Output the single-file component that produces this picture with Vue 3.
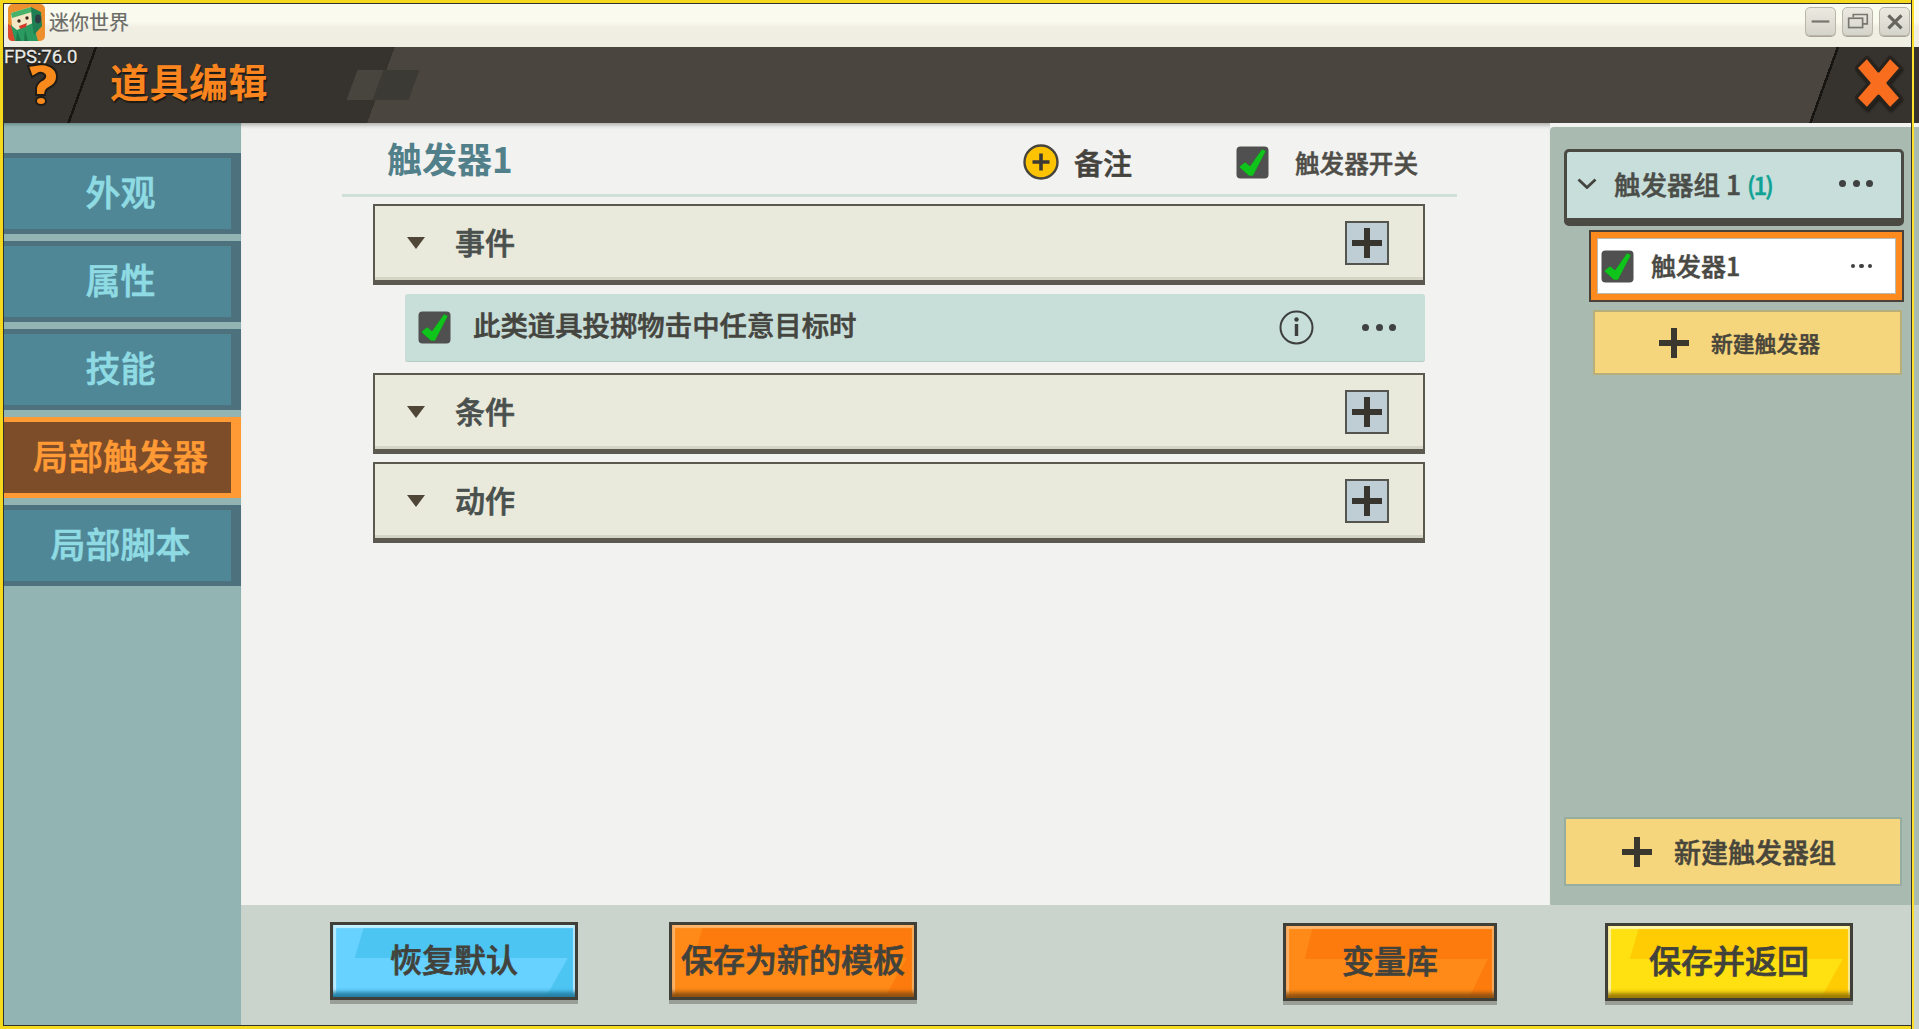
<template>
  <div class="app">
    <div class="titlebar">
      <svg class="logo" viewBox="0 0 37 37">
        <rect width="37" height="37" rx="5" fill="#ee8f2e" />
        <path d="M0 20 L7 24 L10 37 H5 Q0 37 0 32Z" fill="#d9472c" />
        <path d="M3 21 L25 19 L30 37 H7Z" fill="#2a9a60" />
        <path d="M9 27 L13 37 H8Z M17 26 L20 37 H16Z" fill="#1d7a4b" />
        <path d="M3 9 L23 3 L25 19 L9 26 L4 22Z" fill="#f4e7c6" />
        <path d="M3 9 L23 3 L24 8 L4 14Z" fill="#46b26a" />
        <path d="M23 3 L33 8 L34 22 L26 31 L24 19Z" fill="#1f7f52" />
        <circle cx="11" cy="17" r="1.7" fill="#3c2a1c" />
        <circle cx="19" cy="14" r="1.7" fill="#3c2a1c" />
        <path d="M11 22 L19 19 L18 23 L12 25Z" fill="#d23b2b" />
        <ellipse cx="30" cy="15" rx="3" ry="4.4" fill="#2f3d45" />
      </svg>
      <span class="app-name">迷你世界</span>
      <div class="win-btns">
        <button class="win-btn">
          <svg viewBox="0 0 31 29"><path d="M6 14.5 H25" stroke="#77776f" stroke-width="2.4" /></svg>
        </button>
        <button class="win-btn">
          <svg viewBox="0 0 31 29" fill="none" stroke="#77776f" stroke-width="1.8"><path d="M11 10 V7 H26 V17 H21" /><rect x="6" y="11" width="15" height="10" /></svg>
        </button>
        <button class="win-btn">
          <svg viewBox="0 0 31 29"><path d="M9 8 L23 22 M23 8 L9 22" stroke="#66665f" stroke-width="3.4" /></svg>
        </button>
      </div>
    </div>

    <header class="topbar">
      <div class="help-cell">
        <svg class="help" viewBox="0 0 32 44">
          <path d="M1 3 L15 1 Q30 3 30 14 Q30 21 22 25 Q18 27 18 32 H9 V25 Q10 20 15 17 Q19 15 18 12 Q16 9 12 10 L5 14Z" fill="#fa8a1c" stroke="#1f1c18" stroke-width="2" />
          <ellipse cx="14" cy="38" rx="5" ry="4" fill="#fa8a1c" stroke="#1f1c18" stroke-width="2" />
        </svg>
      </div>
      <h1 class="page-title">道具编辑</h1>
      <div class="deco">
        <i class="deco-a"></i>
        <i class="deco-b"></i>
      </div>
      <div class="close-cell">
        <svg class="close" viewBox="0 0 48 56">
          <path d="M12 2 L23.5 16 L35 2 L46 13 L33 28 L46 43 L35 54 L23.5 41 L12 54 L1 43 L14 28 L1 13Z" fill="#f96d1e" stroke="#26221d" stroke-width="3" stroke-linejoin="round" />
        </svg>
      </div>
      <span class="fps">FPS:76.0</span>
    </header>

    <div class="body">
      <nav class="sidebar">
        <div
          v-for="tab in tabs"
          :key="tab"
          :class="['tab', { active: tab === activeTab }]"
        >
          <span>{{ tab }}</span>
        </div>
      </nav>

      <div class="content">
        <div class="upper">
          <main class="editor">
            <div class="editor-head">
              <h2 class="trigger-name">触发器1</h2>
              <div class="note">
                <svg class="note-icon" viewBox="0 0 36 36">
                  <circle cx="18" cy="18" r="16.5" fill="#fdc301" stroke="#46443c" stroke-width="2.4" />
                  <path d="M18 9.5 V26.5 M9.5 18 H26.5" stroke="#3d3a33" stroke-width="3.6" />
                </svg>
                <span>备注</span>
              </div>
              <div class="switch">
                <svg class="check" viewBox="0 0 33 33">
                  <rect x="0.5" y="0.5" width="32" height="32" rx="4" fill="#505050" />
                  <path d="M3 21 L9 16 L14 20 L26 3 L30 5 L17 30 H13Z" fill="#0fc51c" stroke="#3a5a3a" stroke-width="0.6" />
                </svg>
                <span>触发器开关</span>
              </div>
            </div>

            <div class="sections">
              <template v-for="sec in sections" :key="sec.name">
                <div class="section">
                  <i class="caret"></i>
                  <span class="section-name">{{ sec.name }}</span>
                  <span class="add-box">
                    <svg viewBox="0 0 30 30"><path d="M15 0 V30 M0 15 H30" stroke="#38352f" stroke-width="6" /></svg>
                  </span>
                </div>
                <div v-for="item in sec.items" :key="item" class="rule">
                  <svg class="check" viewBox="0 0 33 33">
                    <rect x="0.5" y="0.5" width="32" height="32" rx="4" fill="#505050" />
                    <path d="M3 21 L9 16 L14 20 L26 3 L30 5 L17 30 H13Z" fill="#0fc51c" stroke="#3a5a3a" stroke-width="0.6" />
                  </svg>
                  <span class="rule-text">{{ item }}</span>
                  <svg class="info" viewBox="0 0 35 35">
                    <circle cx="17.5" cy="17.5" r="16" fill="none" stroke="#3c3f3c" stroke-width="2" />
                    <circle cx="17.5" cy="9.5" r="2.2" fill="#3c3f3c" />
                    <path d="M17.5 14 V26" stroke="#3c3f3c" stroke-width="3.4" />
                  </svg>
                  <span class="dots"><i></i><i></i><i></i></span>
                </div>
              </template>
            </div>
          </main>

          <aside class="groups">
            <div class="group-head">
              <svg class="chevron" viewBox="0 0 20 11" fill="none"><path d="M1.5 1.5 L10 9.5 L18.5 1.5" stroke="#45453f" stroke-width="2.8" /></svg>
              <span class="group-name">触发器组 <b>1</b> <em>(1)</em></span>
              <span class="dots"><i></i><i></i><i></i></span>
            </div>
            <div class="trigger-item">
              <svg class="check" viewBox="0 0 33 33">
                <rect x="0.5" y="0.5" width="32" height="32" rx="4" fill="#505050" />
                <path d="M3 21 L9 16 L14 20 L26 3 L30 5 L17 30 H13Z" fill="#0fc51c" stroke="#3a5a3a" stroke-width="0.6" />
              </svg>
              <span class="trigger-label">触发器1</span>
              <span class="dots small"><i></i><i></i><i></i></span>
            </div>
            <button class="new-trigger">
              <svg viewBox="0 0 30 30"><path d="M15 0 V30 M0 15 H30" stroke="#3a372f" stroke-width="6" /></svg>
              <span>新建触发器</span>
            </button>
            <button class="new-group">
              <svg viewBox="0 0 30 30"><path d="M15 0 V30 M0 15 H30" stroke="#3a372f" stroke-width="6" /></svg>
              <span>新建触发器组</span>
            </button>
          </aside>
        </div>

        <footer class="footer">
          <button class="game-btn blue reset">恢复默认</button>
          <button class="game-btn orange template">保存为新的模板</button>
          <button class="game-btn orange vars">变量库</button>
          <button class="game-btn yellow save">保存并返回</button>
        </footer>
      </div>
    </div>

    <div class="capture-frame"></div>
    <div class="capture-line"></div>
  </div>
</template>

<script setup>
const tabs = ['外观', '属性', '技能', '局部触发器', '局部脚本']
const activeTab = '局部触发器'

const sections = [
  { name: '事件', items: ['此类道具投掷物击中任意目标时'] },
  { name: '条件', items: [] },
  { name: '动作', items: [] }
]
</script>

<style>
html, body {
  margin: 0;
  background: #f2f2f0;
}
</style>

<style scoped>
.app {
  position: relative;
  width: 1919px;
  height: 1029px;
  overflow: hidden;
  display: flex;
  flex-direction: column;
  font-family: "Noto Sans CJK SC", "Noto Sans", sans-serif;
}

.titlebar {
  height: 47px;
  flex: none;
  box-sizing: border-box;
  padding: 4px 9px 0 8px;
  display: flex;
  align-items: flex-start;
  background: linear-gradient(#fbfcf1 0, #fafaee 22px, #f1efe4 27px, #efeee2 100%);
}
.logo {
  width: 37px;
  height: 37px;
  flex: none;
}
.app-name {
  margin: 5px 0 0 4px;
  font-size: 20px;
  line-height: 26px;
  color: #6a6a66;
  -webkit-text-stroke: 0.2px currentColor;
}
.win-btns {
  margin-left: auto;
  margin-top: 3px;
  display: flex;
  gap: 6px;
}
.win-btn {
  width: 31px;
  height: 29px;
  padding: 0;
  border: 1px solid #b9b5a8;
  border-radius: 5px;
  background: linear-gradient(#eceae0, #d5d4cb);
  box-shadow: 0 1px 0 #a9a598;
}
.win-btn svg {
  display: block;
  width: 100%;
  height: 100%;
}

.topbar {
  position: relative;
  height: 76px;
  flex: none;
  display: flex;
  align-items: center;
  background: linear-gradient(110deg, #36332e 0, #36332e 371px, #4a463f 371px);
}
.help-cell {
  width: 110px;
  height: 100%;
  flex: none;
  box-sizing: border-box;
  padding: 16px 0 0 27px;
  background: linear-gradient(110deg, transparent 89px, #171512 89px, #171512 91.5px, transparent 91.5px);
}
.help {
  display: block;
  width: 32px;
  height: 44px;
}
.page-title {
  margin: 0 0 10px;
  font-size: 39px;
  line-height: 44px;
  font-weight: 700;
  color: #fa851e;
  text-shadow: 1px 2px 1px #1d1a16;
  letter-spacing: 0.5px;
}
.deco {
  margin-left: 84px;
  display: flex;
  align-items: center;
}
.deco i {
  display: block;
  height: 30px;
  transform: skewX(-20deg);
}
.deco-a {
  width: 32px;
  background: #48453e;
}
.deco-b {
  width: 36px;
  margin-left: -6px;
  background: #3c3a34;
}
.close-cell {
  margin-left: auto;
  width: 110px;
  height: 100%;
  flex: none;
  box-sizing: border-box;
  padding: 8px 0 0 46px;
  background: linear-gradient(110deg, transparent 26px, #171512 26px, #171512 28.5px, #36332e 28.5px);
}
.close {
  display: block;
  width: 48px;
  height: 56px;
  filter: drop-shadow(1px 2px 1px #1f1c18);
}
.fps {
  position: absolute;
  left: 4px;
  top: -2px;
  font-family: "Roboto", "Liberation Sans", sans-serif;
  font-size: 18.5px;
  line-height: 24px;
  color: #eaeae6;
  -webkit-text-stroke: 0.3px currentColor;
  text-shadow: 0 1px 1px #000;
}

.body {
  flex: 1;
  min-height: 0;
  display: flex;
}

.sidebar {
  width: 241px;
  flex: none;
  box-sizing: border-box;
  padding: 30px 0 0 3px;
  display: flex;
  flex-direction: column;
  gap: 7px;
  background: #92b5b3;
  box-shadow: inset 0 4px 3px -2px #6f8f8e;
}
.tab {
  height: 81px;
  box-sizing: border-box;
  border-style: solid;
  border-color: #4d727e;
  border-width: 5px 10px 5px 0;
  background: #4f8797;
  padding-left: 7px;
  display: flex;
  align-items: center;
  justify-content: center;
  font-size: 35px;
  font-weight: 500;
  color: #8fdbe3;
  -webkit-text-stroke: 0.6px currentColor;
}
.tab span {
  margin-top: -6px;
}
.tab.active {
  border-color: #ff9a35;
  background: #7d4c28;
  color: #ff9a35;
}

.content {
  flex: 1;
  min-width: 0;
  display: flex;
  flex-direction: column;
}
.upper {
  height: 782px;
  flex: none;
  display: flex;
}

.editor {
  width: 1309px;
  flex: none;
  box-sizing: border-box;
  padding-left: 101px;
  background: #f2f2f0;
  box-shadow: inset 0 5px 4px -3px #a9a9a4, 0 2px 0 #a7aba6;
}
.editor-head {
  width: 1115px;
  height: 74px;
  box-sizing: border-box;
  display: flex;
  align-items: center;
  border-bottom: 3px solid #cfe0d9;
  padding-left: 45px;
}
.trigger-name {
  width: 636px;
  margin: -2px 0 0;
  flex: none;
  font-size: 35px;
  font-weight: 700;
  line-height: 48px;
  color: #51808a;
}
.note {
  width: 213px;
  flex: none;
  margin-top: 7px;
  display: flex;
  align-items: center;
  gap: 15px;
  font-size: 29px;
  font-weight: 500;
  color: #45433d;
  -webkit-text-stroke: 0.6px currentColor;
}
.note-icon {
  width: 36px;
  height: 36px;
}
.switch {
  margin-top: 7px;
  display: flex;
  align-items: center;
  gap: 26px;
  font-size: 24.6px;
  font-weight: 500;
  color: #4e4d47;
  -webkit-text-stroke: 0.5px currentColor;
}
.check {
  width: 33px;
  height: 33px;
  flex: none;
}

.sections {
  width: 1052px;
  margin: 7px 0 0 31px;
  display: flex;
  flex-direction: column;
}
.section {
  height: 81px;
  box-sizing: border-box;
  margin-bottom: 9px;
  display: flex;
  align-items: center;
  border: 2px solid #5c5a50;
  border-bottom: 5px solid #5c5a50;
  background: #eaeadc;
  box-shadow: inset 0 -3px 0 #d5d5c6;
  padding: 0 34px 4px 32px;
}
.section:has(+ .section) {
  margin-bottom: 8px;
}
.caret {
  width: 0;
  height: 0;
  flex: none;
  margin-top: 4px;
  border-style: solid;
  border-width: 12px 9px 0;
  border-color: #4f4638 transparent transparent;
}
.section-name {
  margin-left: 30px;
  font-size: 30px;
  font-weight: 500;
  color: #49504d;
  -webkit-text-stroke: 0.7px currentColor;
}
.add-box {
  margin: 4px 0 0 auto;
  width: 44px;
  height: 44px;
  box-sizing: border-box;
  border: 2px solid #55554f;
  background: #bfcdd4;
  padding: 5px;
}
.add-box svg {
  display: block;
  width: 30px;
  height: 30px;
}
.rule {
  height: 67px;
  box-sizing: border-box;
  margin: 0 0 12px 32px;
  padding: 0 29px 0 13px;
  display: flex;
  align-items: center;
  border-radius: 3px;
  background: #c8ded9;
  box-shadow: 0 1px 0 #b5cbc6;
}
.rule-text {
  margin: -7px 0 0 22px;
  font-size: 27.4px;
  font-weight: 500;
  color: #454540;
  -webkit-text-stroke: 0.6px currentColor;
}
.info {
  margin-left: auto;
  width: 35px;
  height: 35px;
}
.dots {
  display: flex;
  gap: 6.5px;
  flex: none;
}
.dots i {
  width: 7px;
  height: 7px;
  border-radius: 50%;
  background: #3f4240;
}
.dots.small {
  gap: 4px;
}
.dots.small i {
  width: 4.5px;
  height: 4.5px;
}
.rule .dots {
  margin-left: 48px;
}

.groups {
  position: relative;
  flex: 1;
  margin-top: 4px;
  margin-bottom: -2px;
  box-sizing: border-box;
  padding: 22px 17px 0 14px;
  display: flex;
  flex-direction: column;
  align-items: flex-end;
  background: #a9bbb0;
  border-radius: 4px 0 0 4px;
}
.group-head {
  width: 340px;
  height: 77px;
  box-sizing: border-box;
  flex: none;
  display: flex;
  align-items: center;
  padding: 0 28px 4px 10px;
  border: 3px solid #4a4a42;
  border-bottom-width: 8px;
  border-radius: 5px;
  background: #c8dedb;
}
.chevron {
  width: 20px;
  height: 11px;
  flex: none;
}
.group-name {
  margin-left: 17px;
  font-size: 26.5px;
  font-weight: 500;
  white-space: pre;
  color: #4b4d48;
  -webkit-text-stroke: 0.5px currentColor;
}
.group-name b {
  font-weight: 500;
}
.group-name em {
  font-style: normal;
  font-weight: 500;
  letter-spacing: -2px;
  color: #10a294;
  font-size: 24px;
}
.group-head .dots {
  margin-left: auto;
}
.trigger-item {
  width: 315px;
  height: 72px;
  flex: none;
  margin-top: 4px;
  box-sizing: border-box;
  display: flex;
  align-items: center;
  padding: 0 30px 0 10px;
  border: 2px solid #4a4238;
  background: #fff;
  box-shadow: inset 0 0 0 6px #fd8a1f, inset 0 0 0 7px #b9b9b2;
}
.trigger-label {
  margin: -3px 0 0 17px;
  font-size: 25px;
  font-weight: 500;
  color: #4a4a45;
  -webkit-text-stroke: 0.5px currentColor;
}
.trigger-item .dots {
  margin-left: auto;
}
.new-trigger,
.new-group {
  flex: none;
  box-sizing: border-box;
  font-family: inherit;
  font-weight: 500;
  color: #48453b;
  background: #f6d67d;
  border: 2px solid #b8ae7a;
  display: flex;
  align-items: center;
  padding: 0;
  -webkit-text-stroke: 0.5px currentColor;
}
.new-trigger svg,
.new-group svg {
  width: 30px;
  height: 30px;
  flex: none;
}
.new-trigger {
  width: 309px;
  height: 65px;
  margin: 8px 2px 0 0;
  padding-left: 64px;
  gap: 22px;
  font-size: 21.8px;
}
.new-group {
  width: 338px;
  height: 69px;
  margin: auto 2px 21px 0;
  padding-left: 56px;
  gap: 22px;
  font-size: 27px;
  border-color: #97ad9f;
}

.footer {
  flex: 1;
  position: relative;
  display: flex;
  align-items: flex-start;
  padding: 17px 0 0 89px;
  background: #cad4cd;
}
.game-btn {
  position: relative;
  isolation: isolate;
  height: 78px;
  box-sizing: border-box;
  padding: 0 0 6px;
  border: 3px solid #3f3f38;
  font-family: inherit;
  font-size: 32px;
  font-weight: 500;
  color: #42423c;
  white-space: nowrap;
  -webkit-text-stroke: 0.7px currentColor;
  box-shadow: 0 4px 0 #999e97;
  background: var(--light);
  overflow: hidden;
}
.game-btn::before {
  content: "";
  position: absolute;
  inset: 0;
  z-index: -1;
  background: var(--dark);
  clip-path: polygon(13% 0, 100% 0, 100% 100%, 88% 100%, 97% 46%, 9% 46%);
}
.game-btn::after {
  content: "";
  position: absolute;
  inset: 0;
  z-index: -1;
  box-shadow: inset 0 -7px 4px -2px var(--edge), inset 0 3px 1px var(--shine), inset 3px 0 1px var(--shine), inset -2px 0 1px var(--shine);
}
.blue {
  --light: #67d1ff;
  --dark: #4cc5f3;
  --edge: #247fa3;
  --shine: #c6f0ff;
}
.orange {
  --light: #ff8a17;
  --dark: #fd7b0c;
  --edge: #8f5010;
  --shine: #ffb56c;
}
.yellow {
  --light: #ffe010;
  --dark: #ffcb03;
  --edge: #9a7a05;
  --shine: #fff6a8;
}
.reset {
  width: 248px;
}
.template {
  width: 248px;
  margin-left: 91px;
}
.vars {
  width: 214px;
  margin-left: 366px;
  margin-top: 1px;
}
.save {
  width: 248px;
  margin-left: 108px;
  margin-top: 1px;
}

.capture-frame {
  position: absolute;
  left: 0;
  top: 0;
  width: 1912px;
  height: 1029px;
  box-sizing: border-box;
  border: 3px solid #f5d91f;
  border-right: none;
  box-shadow: inset 1px 1px 0 #33332e, inset 0 -1px 0 #33332e;
  pointer-events: none;
}
.capture-line {
  position: absolute;
  left: 1911px;
  top: 0;
  width: 3px;
  height: 1029px;
  box-sizing: border-box;
  border-left: 1px solid #33332e;
  background: #ffe02a;
  pointer-events: none;
}
</style>
